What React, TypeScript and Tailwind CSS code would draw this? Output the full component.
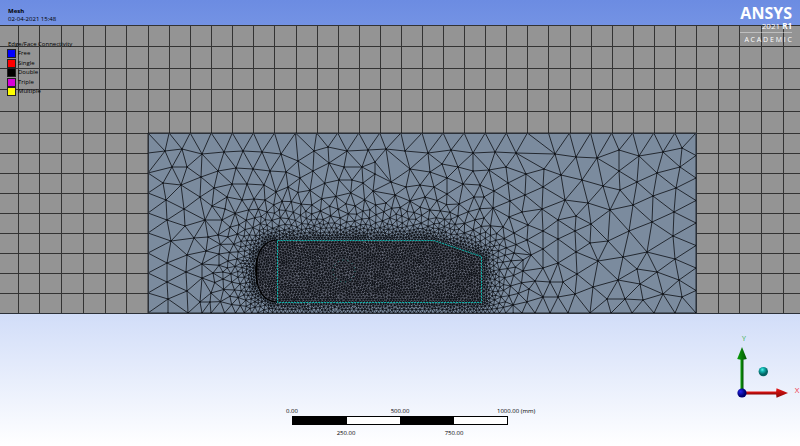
type Point = [number, number]

const LEFT = 148
const RIGHT = 696
const TOP = 133
const BOTTOM = 313

// nodes of the coarse outer mesh
const NODES: Point[] = [
  [165, 151], [182, 149], [202, 154], [224, 152], [243, 151], [262, 152], [281, 154], [298, 161], [314, 151], [328, 147],
  [172, 167], [187, 167], [201, 177], [218, 171], [236, 168], [253, 169], [270, 171], [286, 172], [313, 171], [329, 163],
  [163, 183], [181, 185], [200, 197], [214, 188], [232, 184], [247, 184], [264, 185], [276, 192], [288, 187], [300, 178],
  [166, 200], [184, 209], [167, 220], [185, 226], [205, 220], [212, 206], [222, 220], [227, 197], [242, 200], [254, 199],
  [265, 200], [225, 209], [171, 241], [194, 238], [187, 255], [208, 237], [206, 251], [167, 263], [186, 272], [202, 264],
  [167, 282], [202, 278], [187, 291], [168, 299], [200, 302], [210, 302], [211, 293], [218, 235], [219, 254], [213, 273],
  [347, 151], [368, 150], [386, 149], [405, 151], [428, 153], [451, 150], [473, 153], [495, 152], [516, 153], [526, 174],
  [344, 167], [362, 167], [375, 162], [410, 169], [430, 172], [442, 164], [458, 167], [473, 171], [489, 170], [506, 167],
  [339, 180], [352, 180], [375, 174], [363, 183], [391, 182], [406, 187], [420, 185], [434, 187], [447, 178], [463, 184],
  [480, 185], [494, 191], [508, 183], [373, 191], [395, 195], [425, 197], [447, 194], [459, 204], [474, 197], [484, 197],
  [510, 201], [522, 212], [525, 195], [493, 208], [509, 217], [386, 203], [410, 201],
  [555, 154], [576, 157], [597, 158], [619, 150], [639, 156], [663, 152], [682, 148], [544, 169], [561, 175], [582, 180],
  [603, 186], [620, 190], [619, 171], [637, 182], [657, 173], [680, 167], [676, 188], [653, 196], [543, 187], [565, 200],
  [588, 203], [610, 210], [633, 205], [674, 212], [652, 222], [629, 231], [673, 236], [542, 209], [558, 220], [576, 216],
  [591, 224], [543, 231], [558, 239], [575, 231], [590, 243], [608, 241], [576, 252], [543, 249], [647, 252], [623, 257],
  [598, 261], [675, 259], [558, 263], [543, 268], [577, 274], [637, 269], [657, 272], [618, 280], [640, 284], [679, 280],
  [563, 282], [550, 282], [593, 287], [575, 294], [558, 297], [543, 297], [607, 299], [625, 299], [643, 300], [663, 294],
  [682, 297], [528, 225], [527, 240], [531, 255], [535, 281], [529, 289], [523, 271], [514, 233], [503, 227], [514, 253],
  [523, 260],
]

const bezier = (a: Point, b: Point, c: Point, d: Point, n: number): Point[] =>
  Array.from({ length: n }, (_, i) => {
    const t = i / n
    const u = 1 - t
    return [0, 1].map(
      (k) => u * u * u * a[k] + 3 * u * u * t * b[k] + 3 * u * t * t * c[k] + t * t * t * d[k],
    ) as Point
  })

const line = (a: Point, b: Point, step = 2.7): Point[] => {
  const n = Math.max(1, Math.round(Math.hypot(b[0] - a[0], b[1] - a[1]) / step))
  return Array.from({ length: n }, (_, i) => [a[0] + ((b[0] - a[0]) * i) / n, a[1] + ((b[1] - a[1]) * i) / n])
}

const OUTLINE: Point[] = [
  ...line([277, 240], [434, 240]),
  ...line([434, 240], [482, 256]),
  ...line([482, 256], [482, 302]),
  ...line([482, 302], [277, 302]),
  ...bezier([277, 302], [264, 302], [256, 290], [256, 271], 15),
  ...bezier([256, 271], [256, 252], [264, 240], [277, 240], 15),
]

function inBody(x: number, y: number) {
  let inside = false
  for (let i = 0, j = OUTLINE.length - 1; i < OUTLINE.length; j = i++) {
    const [xi, yi] = OUTLINE[i]
    const [xj, yj] = OUTLINE[j]
    if (yi > y !== yj > y && x < ((xj - xi) * (y - yi)) / (yj - yi) + xi) inside = !inside
  }
  return inside
}

// wanted edge length at a place, growing with the distance from the body
function edgeSize(x: number, y: number) {
  if (inBody(x, y)) return 2.7
  let best = Infinity
  for (const p of OUTLINE) best = Math.min(best, (p[0] - x) ** 2 + (p[1] - y) ** 2)
  const d = Math.sqrt(best)
  return Math.min(20, 2.4 + Math.max(0, d - 3) * 0.22)
}

// smallest gap between two nodes
const minGap = (size: number) => size * (size > 10 ? 0.92 : 0.82)

function createRandom(seed: number) {
  let s = seed
  return () => {
    s = (s * 1664525 + 1013904223) % 4294967296
    return s / 4294967296
  }
}

type Triangle = { a: number; b: number; c: number; x: number; y: number; r: number }

function triangulate(points: Point[]) {
  const n = points.length
  const all: Point[] = [...points, [-9000, -6000], [9000, -6000], [400, 12000]]
  const order = points.map((_, i) => i).sort((i, j) => points[i][0] - points[j][0])
  const make = (a: number, b: number, c: number): Triangle => {
    const [ax, ay] = all[a]
    const bx = all[b][0] - ax
    const by = all[b][1] - ay
    const cx = all[c][0] - ax
    const cy = all[c][1] - ay
    const d = 2 * (bx * cy - by * cx) || 1e-9
    const ux = (cy * (bx * bx + by * by) - by * (cx * cx + cy * cy)) / d
    const uy = (bx * (cx * cx + cy * cy) - cx * (bx * bx + by * by)) / d
    return { a, b, c, x: ax + ux, y: ay + uy, r: ux * ux + uy * uy }
  }
  let open = [make(n, n + 1, n + 2)]
  const done: Triangle[] = []
  for (const i of order) {
    const [px, py] = all[i]
    const edges = new Map<number, [number, number]>()
    const keep: Triangle[] = []
    for (const t of open) {
      const dx = px - t.x
      if (dx > 0 && dx * dx > t.r) {
        done.push(t)
      } else if (dx * dx + (py - t.y) ** 2 < t.r) {
        for (const [u, v] of [[t.a, t.b], [t.b, t.c], [t.c, t.a]]) {
          const key = Math.min(u, v) * 100000 + Math.max(u, v)
          if (edges.has(key)) edges.delete(key)
          else edges.set(key, [u, v])
        }
      } else {
        keep.push(t)
      }
    }
    edges.forEach(([u, v]) => keep.push(make(u, v, i)))
    open = keep
  }
  const found = new Map<number, [number, number]>()
  for (const t of done.concat(open)) {
    for (const [u, v] of [[t.a, t.b], [t.b, t.c], [t.c, t.a]]) {
      if (u < n && v < n) found.set(Math.min(u, v) * 100000 + Math.max(u, v), [u, v])
    }
  }
  return [...found.values()]
}

function buildMesh() {
  const random = createRandom(7)
  const points: Point[] = []
  const cells = new Map<number, Point[]>()
  const cellKey = (cx: number, cy: number) => cx * 1000 + cy
  const add = (p: Point) => {
    const key = cellKey(Math.floor(p[0] / 4), Math.floor(p[1] / 4))
    cells.set(key, [...(cells.get(key) ?? []), p])
    points.push(p)
  }
  const isFree = (x: number, y: number, r: number) => {
    for (let cx = Math.floor((x - r) / 4); cx <= Math.floor((x + r) / 4); cx++) {
      for (let cy = Math.floor((y - r) / 4); cy <= Math.floor((y + r) / 4); cy++) {
        for (const p of cells.get(cellKey(cx, cy)) ?? []) {
          if ((p[0] - x) ** 2 + (p[1] - y) ** 2 < r * r) return false
        }
      }
    }
    return true
  }

  for (let i = 0; i <= 26; i++) add([LEFT + ((RIGHT - LEFT) * i) / 26, TOP])
  for (let i = 1; i <= 9; i++) add([LEFT, TOP + 20 * i])
  for (let i = 1; i <= 8; i++) add([RIGHT, TOP + 22.5 * i])
  for (const x of [168, 188, 202, 522, 535, 550, 568, 590, 611, 632, 654, 675]) add([x, BOTTOM])
  for (let x = 211; x < 517; x += edgeSize(x, BOTTOM)) add([x, BOTTOM])
  OUTLINE.forEach(add)
  NODES.forEach(add)

  const fixed = points.length
  for (let i = 0; i < points.length; i++) {
    const [x, y] = points[i]
    const size = edgeSize(x, y)
    for (let k = 0; k < 18; k++) {
      const angle = random() * Math.PI * 2
      const reach = size * (0.82 + random() * 0.4)
      const nx = x + Math.cos(angle) * reach
      const ny = y + Math.sin(angle) * reach
      if (nx < LEFT + 2 || nx > RIGHT - 2 || ny < TOP + 2 || ny > BOTTOM - 2) continue
      if (isFree(nx, ny, minGap(edgeSize(nx, ny)))) add([nx, ny])
    }
  }

  let edges = triangulate(points)
  for (let pass = 0; pass < 2; pass++) {
    const sums = points.map(() => [0, 0, 0])
    for (const [u, v] of edges) {
      for (const [p, q] of [[u, v], [v, u]]) {
        sums[p][0] += points[q][0]
        sums[p][1] += points[q][1]
        sums[p][2] += 1
      }
    }
    for (let i = fixed; i < points.length; i++) {
      points[i] = [sums[i][0] / sums[i][2], sums[i][1] / sums[i][2]]
    }
    edges = triangulate(points)
  }

  const paths = { fine: '', medium: '', coarse: '' }
  for (const [u, v] of edges) {
    const [x1, y1] = points[u]
    const [x2, y2] = points[v]
    const length = Math.hypot(x2 - x1, y2 - y1)
    const kind = length < 4 ? 'fine' : length < 8 ? 'medium' : 'coarse'
    paths[kind] += `M${x1.toFixed(1)} ${y1.toFixed(1)}L${x2.toFixed(1)} ${y2.toFixed(1)}`
  }
  const nodes = points
    .filter((_, i) => i >= 37)
    .map(([x, y]) => `M${x.toFixed(1)} ${y.toFixed(1)}h0`)
    .join('')
  return { ...paths, nodes }
}

function buildGrid() {
  let d = ''
  for (const x of [18.5, 39.5, 61.5, 83.5, 105.5, 126.5, 148.5, 696.5, 718.5, 739.5, 761.5, 783.5]) d += `M${x} 25V313`
  for (let i = 1; i < 26; i++) d += `M${Math.round(LEFT + ((RIGHT - LEFT) * i) / 26) + 0.5} 25V133`
  for (const y of [25.5, 46.5, 68.5, 89.5, 111.5, 133.5]) d += `M0 ${y}H800`
  for (let y = 153; y < BOTTOM; y += 20) d += `M0 ${y}.5H148M696 ${y}.5H800`
  return d
}

const mesh = buildMesh()
const grid = buildGrid()

const LEGEND = [
  { label: 'Free', color: 'bg-[#0000ff]' },
  { label: 'Single', color: 'bg-[#ff0000]' },
  { label: 'Double', color: 'bg-black' },
  { label: 'Triple', color: 'bg-[#d800d8]' },
  { label: 'Multiple', color: 'bg-[#ffff00]' },
]

function MeshView() {
  return (
    <svg viewBox="0 25 800 289" className="block h-auto w-full" role="img" aria-label="Surface mesh">
      <rect x="0" y="25" width="800" height="289" fill="#949494" />
      <path d={grid} stroke="#333" fill="none" />
      <rect x="148" y="133" width="549" height="181" fill="#7b8b9e" />
      <path d={`M${OUTLINE.map((p) => p.join(' ')).join('L')}Z`} fill="#6c707e" />
      <g stroke="#0c0f14" fill="none">
        <path d={mesh.coarse} strokeWidth="0.8" />
        <path d={mesh.medium} strokeWidth="0.7" />
        <path d={mesh.fine} strokeWidth="0.75" />
        <path d={mesh.nodes} strokeWidth="1.4" strokeLinecap="round" />
      </g>
      <path d="M277 240C264 240 256 252 256 271S264 302 277 302" fill="none" stroke="#000" strokeWidth="1.2" />
      <path d="M257 258Q255 271 257 284Q257 271 257 258Z" fill="#000" stroke="#000" />
      <g fill="none">
        <path d="M277.5 240.5H434L481.5 256.5V302.5H277.5Z" stroke="#1c4346" />
        <path d="M277.5 240.5H434L481.5 256.5V302.5H277.5Z" stroke="#12b0aa" strokeDasharray="2 1" />
        <circle cx="344" cy="271" r="11" stroke="#1c8a84" strokeWidth="0.8" strokeDasharray="1 4" />
      </g>
      <path d="M148.5 313.5V133.5H696.5V313.5M0 313.5H800" fill="none" stroke="#2b3038" />
    </svg>
  )
}

function Legend() {
  return (
    <div className="absolute top-[15px] left-2">
      <div className="text-[6px] leading-[9px]">Edge/Face Connectivity</div>
      <ul className="flex flex-col">
        {LEGEND.map((item) => (
          <li key={item.label} className="flex h-[9px] items-center gap-[3px] text-[6px] leading-[9px] even:h-[10px]">
            <span className={`size-[7px] outline outline-[#222] ${item.color}`} />
            {item.label}
          </li>
        ))}
      </ul>
    </div>
  )
}

function Logo() {
  return (
    <div className="absolute top-[5px] right-2 flex flex-col items-end text-white">
      <div className="text-[16px] leading-[16px] font-bold">ANSYS</div>
      <div className="text-[8px] leading-[9px]">
        2021 <b>R1</b>
      </div>
      <div className="mt-[2px] w-full border-t border-white/40 text-right text-[7px] leading-[14px]">
        A C A D E M I C
      </div>
    </div>
  )
}

function ScaleBar() {
  return (
    <div className="mt-[93px] w-[270px] text-[6px] leading-[9px]">
      <div className="grid grid-cols-5 text-center">
        <span>0.00</span>
        <span className="col-start-3">500.00</span>
        <span className="col-start-5 pl-4 text-left whitespace-nowrap">1000.00 (mm)</span>
      </div>
      <div className="mx-[27px] grid h-[9px] grid-cols-4 border border-black bg-white">
        <span className="bg-black" />
        <span />
        <span className="bg-black" />
        <span />
      </div>
      <div className="mt-1 grid grid-cols-5 text-center">
        <span className="col-start-2">250.00</span>
        <span className="col-start-4">750.00</span>
      </div>
    </div>
  )
}

function Triad() {
  return (
    <svg viewBox="730 333 70 68" className="mt-[19px] h-[68px] w-[70px] justify-self-end" role="img" aria-label="Axis triad">
      <defs>
        <linearGradient id="green" x1="0" x2="1">
          <stop offset="0" stopColor="#0aa00a" />
          <stop offset="1" stopColor="#045504" />
        </linearGradient>
        <linearGradient id="red" x1="0" y1="0" x2="0" y2="1">
          <stop offset="0" stopColor="#e81515" />
          <stop offset="1" stopColor="#8a0505" />
        </linearGradient>
        <radialGradient id="blue" cx="0.35" cy="0.35">
          <stop offset="0" stopColor="#2424ee" />
          <stop offset="1" stopColor="#000070" />
        </radialGradient>
        <radialGradient id="teal" cx="0.4" cy="0.3">
          <stop offset="0" stopColor="#5ff0e8" />
          <stop offset="0.4" stopColor="#12b5b0" />
          <stop offset="1" stopColor="#046464" />
        </radialGradient>
      </defs>
      <rect x="740.5" y="357" width="3" height="34" fill="url(#green)" />
      <path d="M742 347L746.8 359Q742 360.5 737.2 359Z" fill="url(#green)" />
      <rect x="745" y="391.5" width="33" height="3" fill="url(#red)" />
      <path d="M788 393L776.5 397.8Q775.5 393 776.5 388.2Z" fill="url(#red)" />
      <circle cx="742" cy="393" r="4.6" fill="url(#blue)" />
      <circle cx="763.3" cy="371.6" r="4.7" fill="url(#teal)" />
      <text x="744" y="341" textAnchor="middle" fontSize="7" fill="#2fae3f">
        Y
      </text>
      <text x="797" y="393" textAnchor="middle" fontSize="8" fill="#f03a4a">
        X
      </text>
    </svg>
  )
}

export default function App() {
  return (
    <main className="relative min-h-screen bg-linear-to-b from-[#6c8ce2] to-white font-['Open_Sans','Noto_Sans',sans-serif] text-black">
      <header className="h-[25px] pt-[7px] pl-2 text-[6px] leading-[8px]">
        <h1 className="font-bold">Mesh</h1>
        <p>02-04-2021 15:48</p>
      </header>
      <section className="relative">
        <MeshView />
        <Legend />
      </section>
      <Logo />
      <footer className="grid grid-cols-[1fr_auto_1fr] items-start">
        <span />
        <ScaleBar />
        <Triad />
      </footer>
    </main>
  )
}
